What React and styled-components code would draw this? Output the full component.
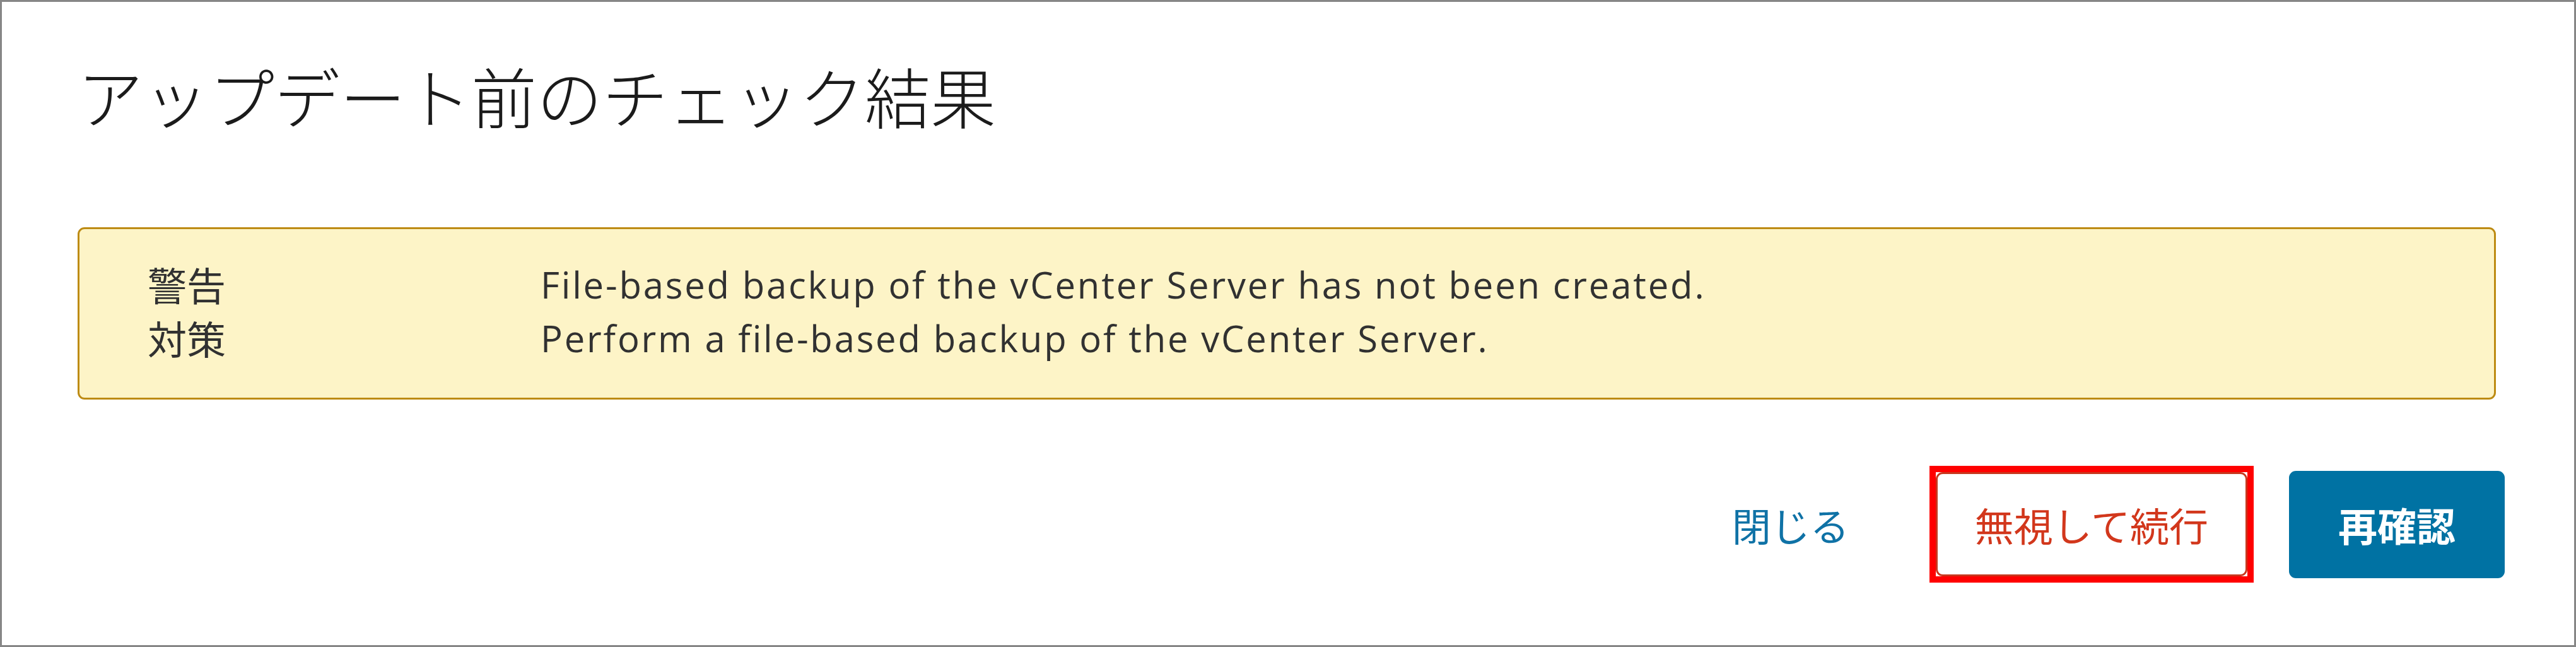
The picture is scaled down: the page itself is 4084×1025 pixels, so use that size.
import React from "react";
import styled, { createGlobalStyle } from "styled-components";

const Global = createGlobalStyle`
  html, body { margin: 0; padding: 0; background: #ffffff; }
  * { box-sizing: border-box; }
`;

const Frame = styled.div`
  width: 4084px;
  height: 1025px;
  border: 3px solid #868686;
  background: #ffffff;
  display: flex;
  flex-direction: column;
  font-family: "Open Sans", "Noto Sans CJK JP", sans-serif;
  color: #333333;
`;

const Header = styled.header`
  padding: 96px 120px 0 120px;
`;

const Title = styled.h1`
  margin: 0;
  font-family: "Noto Sans CJK JP", sans-serif;
  font-weight: 300;
  font-size: 104px;
  line-height: 104px;
  color: #1b1b1b;
  letter-spacing: 0;
`;

const Alert = styled.section`
  margin: 157px 124px 0 120px;
  padding: 45px 0 52px 108px;
  background: #fdf4c7;
  border: 3px solid #bd8b13;
  border-radius: 11px;
  display: grid;
  grid-template-columns: 623px 1fr;
  font-size: 60px;
  line-height: 85px;
  color: #313131;
`;

const Label = styled.div`
  font-family: "Noto Sans CJK JP", sans-serif;
  font-size: 62px;
`;

const Value = styled.div`
  font-family: "Open Sans", "Noto Sans CJK JP", sans-serif;
  font-size: 58px;
  letter-spacing: 2.8px;
`;

const Footer = styled.footer`
  margin-top: 105px;
  padding-right: 110px;
  display: flex;
  justify-content: flex-end;
  align-items: center;
  gap: 56px;
`;

const Highlight = styled.span`
  display: inline-flex;
  border: 10px solid #ff0000;
`;

const Button = styled.button`
  height: ${(p) => p.$h}px;
  font-family: "Noto Sans CJK JP", sans-serif;
  font-size: 62px;
  line-height: 1;
  cursor: pointer;
  border-radius: 11px;
  padding: 0 ${(p) => p.$pad}px;
  border: 3px solid transparent;
  background: transparent;
  font-weight: 400;
  white-space: nowrap;

  ${(p) =>
    p.$variant === "link" &&
    `
    color: #0f72a6;
  `}

  ${(p) =>
    p.$variant === "danger" &&
    `
    color: #d2371c;
    border-color: #c8381f;
    background: #ffffff;
  `}

  ${(p) =>
    p.$variant === "primary" &&
    `
    color: #ffffff;
    background: #0072a3;
    border-color: #0072a3;
    font-weight: 700;
  `}
`;

export default function App() {
  return (
    <>
      <Global />
      <Frame>
        <Header>
          <Title>アップデート前のチェック結果</Title>
        </Header>
        <Alert>
          <Label>警告</Label>
          <Value>File-based backup of the vCenter Server has not been created.</Value>
          <Label>対策</Label>
          <Value>Perform a file-based backup of the vCenter Server.</Value>
        </Alert>
        <Footer>
          <Button $variant="link" $pad={68} $h={168}>閉じる</Button>
          <Highlight>
            <Button $variant="danger" $pad={59} $h={165}>無視して続行</Button>
          </Highlight>
          <Button $variant="primary" $pad={75} $h={170}>再確認</Button>
        </Footer>
      </Frame>
    </>
  );
}
